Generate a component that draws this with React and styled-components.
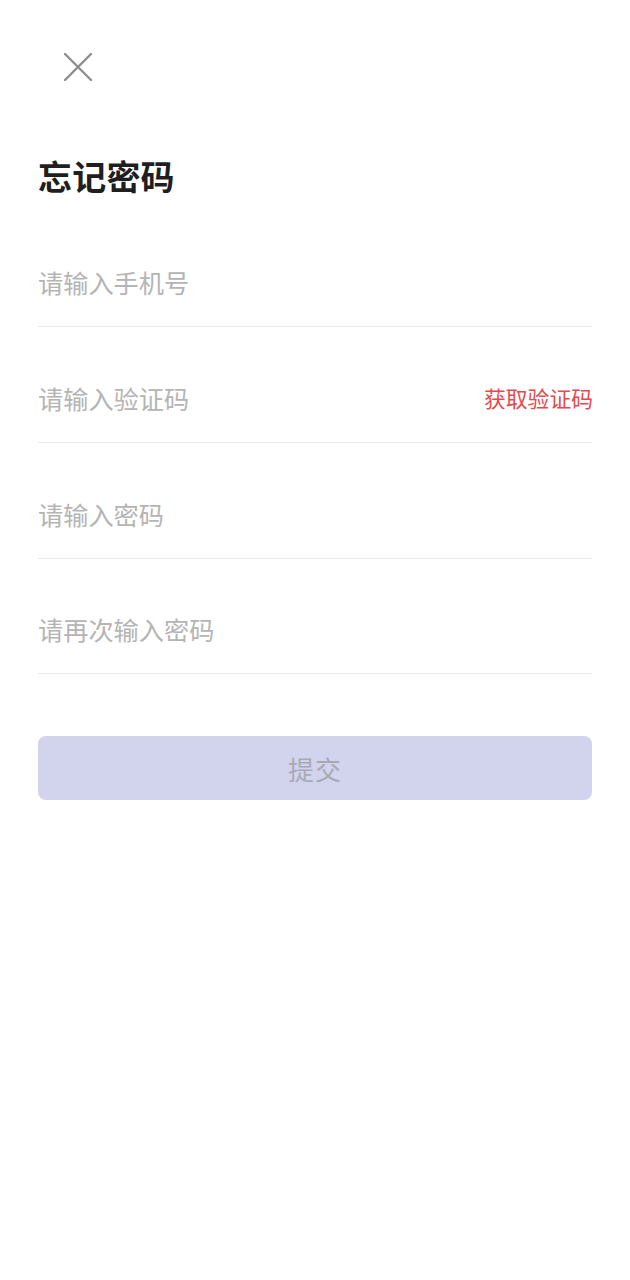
import React from 'react';
import styled, { createGlobalStyle } from 'styled-components';

const GlobalStyle = createGlobalStyle`
  html, body { margin: 0; padding: 0; background: #ffffff; }
  body {
    font-family: "Noto Sans CJK SC", "Noto Sans", sans-serif;
    -webkit-font-smoothing: antialiased;
  }
  * { box-sizing: border-box; }
`;

const Page = styled.div`
  width: 630px;
  min-height: 1280px;
  background: #fff;
  padding: 0 38px;
  display: flex;
  flex-direction: column;
`;

const TopBar = styled.div`
  height: 154px;
  display: flex;
  align-items: flex-start;
  padding-top: 52px;
  padding-left: 25px;
`;

const CloseButton = styled.button`
  width: 30px;
  height: 30px;
  padding: 0;
  border: none;
  background: transparent;
  display: flex;
  align-items: center;
  justify-content: center;
  cursor: pointer;
`;

const Title = styled.h1`
  margin: 0;
  padding-left: 0;
  font-size: 34px;
  line-height: 44px;
  font-weight: 700;
  color: #1f1f1f;
  letter-spacing: 0.2px;
`;

const Form = styled.div`
  display: flex;
  flex-direction: column;
`;

const Row = styled.div`
  height: ${p => p.$h}px;
  border-bottom: 1px solid #ebebeb;
  display: flex;
  align-items: flex-end;
  justify-content: space-between;
  padding-bottom: 27px;
`;

const Field = styled.input`
  flex: 1;
  min-width: 0;
  border: none;
  outline: none;
  padding: 0;
  font-family: inherit;
  font-size: 25.2px;
  line-height: 34px;
  height: 34px;
  color: #333;
  background: transparent;
  &::placeholder { color: #b4b4b4; }
`;

const CodeLink = styled.span`
  font-size: 21.8px;
  line-height: 34px;
  color: #e24a50;
  white-space: nowrap;
  margin-right: -1px;
`;

const Submit = styled.button`
  margin-top: 62px;
  height: 64px;
  width: 100%;
  border: none;
  border-radius: 8px;
  background: #d1d4ec;
  color: #a9a9b6;
  font-family: inherit;
  font-size: 26px;
  letter-spacing: 1px;
`;

const fields = [
  { ph: '请输入手机号', h: 129 },
  { ph: '请输入验证码', h: 116, code: true },
  { ph: '请输入密码', h: 116 },
  { ph: '请再次输入密码', h: 115 },
];

export default function App() {
  return (
    <>
      <GlobalStyle />
      <Page>
        <TopBar>
          <CloseButton aria-label="close">
            <svg width="30" height="30" viewBox="0 0 30 30">
              <path d="M2 2 L28 28 M28 2 L2 28" stroke="#8c8c8c" strokeWidth="2.3" strokeLinecap="round" />
            </svg>
          </CloseButton>
        </TopBar>
        <Title>忘记密码</Title>
        <Form>
          {fields.map(f => (
            <Row key={f.ph} $h={f.h}>
              <Field placeholder={f.ph} />
              {f.code && <CodeLink>获取验证码</CodeLink>}
            </Row>
          ))}
        </Form>
        <Submit>提交</Submit>
      </Page>
    </>
  );
}
